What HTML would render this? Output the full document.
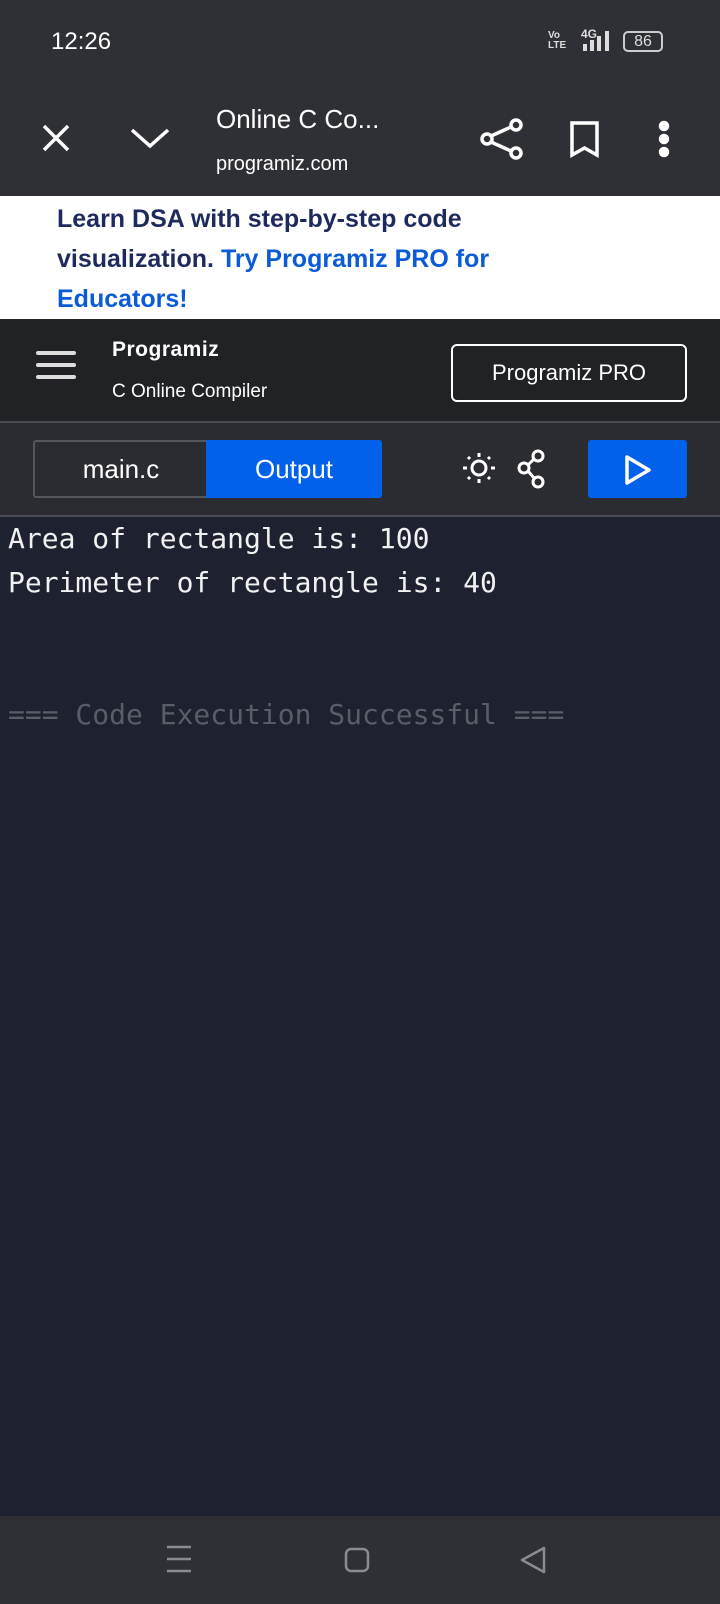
<!DOCTYPE html>
<html><head><meta charset="utf-8"><style>
*{margin:0;padding:0;box-sizing:border-box}
body{width:720px;height:1604px;overflow:hidden;background:#1e2130;font-family:"Liberation Sans",sans-serif;position:relative}
.a{position:absolute}
.mono{font-family:"DejaVu Sans Mono","Liberation Mono",monospace;font-size:28px;white-space:pre;color:#f1f1f1}
</style></head><body>
<div class="a" style="left:0;top:0;width:720px;height:196px;background:#2f3035"></div>
<div class="a" style="left:51px;top:28px;color:#fff;font-size:24px">12:26</div>
<div class="a" style="left:548px;top:31px;color:#ddd;font-size:10px;line-height:10px;font-weight:bold">Vo<br>LTE</div>
<div class="a" style="left:581px;top:27px;color:#ddd;font-size:12px;font-weight:bold">4G</div>
<svg class="a" style="left:582px;top:30px" width="32" height="22"><rect x="1" y="14" width="4" height="7" fill="#ddd"/><rect x="8" y="10" width="4" height="11" fill="#ddd"/><rect x="15" y="6" width="4" height="15" fill="#ddd"/><rect x="23" y="1" width="4" height="20" fill="#ddd"/></svg>
<div class="a" style="left:623px;top:31px;width:40px;height:21px;border:2px solid #ccc;border-radius:5px;color:#ddd;font-size:16px;text-align:center;line-height:17px">86</div>
<svg class="a" style="left:38px;top:120px" width="200" height="40" fill="none" stroke="#fff" stroke-width="3.5"><path d="M6 6L30 30M30 6L6 30"/><path d="M94 10L112 26L130 10"/></svg>
<div class="a" style="left:216px;top:104px;color:#fff;font-size:26px">Online C Co...</div>
<div class="a" style="left:216px;top:153px;color:#fff;font-size:20px">programiz.com</div>
<svg class="a" style="left:480px;top:115px" width="210" height="50" fill="none" stroke="#fff" stroke-width="3.5"><circle cx="36" cy="10" r="5"/><circle cx="36" cy="38" r="5"/><circle cx="7" cy="24" r="5"/><path d="M11 21L31 12M11 27L31 36"/><path d="M92 8H117V40L104.5 33L92 40Z"/><circle cx="184" cy="11" r="3.5" fill="#fff"/><circle cx="184" cy="24" r="3.5" fill="#fff"/><circle cx="184" cy="37" r="3.5" fill="#fff"/></svg>
<div class="a" style="left:0;top:196px;width:720px;height:123px;background:#fff"></div>
<div class="a" style="left:57px;top:199px;width:560px;font-size:25px;line-height:40px;color:#1f2a5c;font-weight:bold">Learn DSA with step-by-step code visualization. <span style="color:#0b5bd8">Try Programiz PRO for Educators!</span></div>
<div class="a" style="left:0;top:319px;width:720px;height:102px;background:#202226"></div>
<svg class="a" style="left:36px;top:351px" width="40" height="30"><rect x="0" y="0" width="40" height="4" rx="2" fill="#ddd"/><rect x="0" y="12" width="40" height="4" rx="2" fill="#ddd"/><rect x="0" y="24" width="40" height="4" rx="2" fill="#ddd"/></svg>
<div class="a" style="left:112px;top:338px;color:#fff;font-size:21px;font-weight:bold;letter-spacing:0.5px">Programiz</div>
<div class="a" style="left:112px;top:381px;color:#fff;font-size:19px">C Online Compiler</div>
<div class="a" style="left:451px;top:344px;width:236px;height:58px;border:2px solid #fff;border-radius:6px;color:#fff;font-size:22px;text-align:center;line-height:54px">Programiz PRO</div>
<div class="a" style="left:0;top:421px;width:720px;height:96px;background:#2b2c31;border-top:2px solid #4a4c52;border-bottom:2px solid #4a4c52"></div>
<div class="a" style="left:33px;top:440px;width:174px;height:58px;border:2px solid #55575d;border-right:none;border-radius:3px 0 0 3px;color:#fff;font-size:26px;text-align:center;line-height:54px">main.c</div>
<div class="a" style="left:206px;top:440px;width:176px;height:58px;background:#0261ea;border-radius:0 3px 3px 0;color:#fff;font-size:26px;text-align:center;line-height:58px">Output</div>
<svg class="a" style="left:460px;top:448px" width="100" height="44" fill="none" stroke="#fff" stroke-width="3"><circle cx="19" cy="20" r="7"/><path d="M19 5v4M19 31v4M3 20h4M31 20h4M8 9l2 2M28 29l2 2M30 9l-2 2M10 29l-2 2"/><circle cx="78" cy="8" r="5"/><circle cx="78" cy="34" r="5"/><circle cx="64" cy="20" r="5"/><path d="M68 17L74 11M68 23L74 30"/></svg>
<div class="a" style="left:588px;top:440px;width:99px;height:58px;background:#0261ea;border-radius:3px"></div>
<svg class="a" style="left:622px;top:453px" width="32" height="34" fill="none" stroke="#fff" stroke-width="3.5"><path d="M5 4L27 17L5 30Z" stroke-linejoin="round"/></svg>
<div class="a mono" style="left:8px;top:522px">Area of rectangle is: 100</div>
<div class="a mono" style="left:8px;top:566px">Perimeter of rectangle is: 40</div>
<div class="a mono" style="left:8px;top:698px;color:#5a5d68">=== Code Execution Successful ===</div>
<div class="a" style="left:0;top:1516px;width:720px;height:88px;background:#2f3035"></div>
<svg class="a" style="left:160px;top:1542px" width="400" height="36" fill="none" stroke="#8a8b90" stroke-width="2.5"><path d="M7 5h24M7 17h24M7 29h24"/><rect x="186" y="7" width="22" height="22" rx="5"/><path d="M384 6L362 18L384 30Z" stroke-linejoin="round"/></svg>
</body></html>
